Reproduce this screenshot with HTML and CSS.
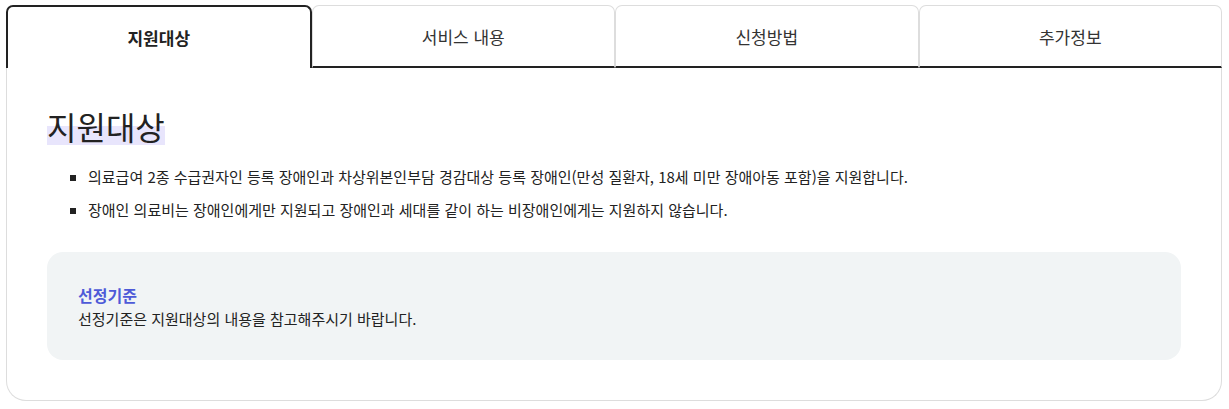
FILE: index.html
```html
<!DOCTYPE html>
<html lang="ko">
<head>
    <meta charset="UTF-8">
    <meta name="viewport" content="width=device-width, initial-scale=1.0">
    <title>지원대상</title>
    <link rel="stylesheet" href="styles.css">
</head>
<body>
    <div class="wrap">
        <div class="tabs">
            <button class="tab active" type="button">지원대상</button>
            <button class="tab" type="button">서비스 내용</button>
            <button class="tab" type="button">신청방법</button>
            <button class="tab" type="button">추가정보</button>
        </div>
        <div class="panel">
            <h2 class="title"><span>지원대상</span></h2>
            <ul class="list">
                <li>의료급여 2종 수급권자인 등록 장애인과 차상위본인부담 경감대상 등록 장애인(만성 질환자, 18세 미만 장애아동 포함)을 지원합니다.</li>
                <li>장애인 의료비는 장애인에게만 지원되고 장애인과 세대를 같이 하는 비장애인에게는 지원하지 않습니다.</li>
            </ul>
            <div class="info">
                <h3>선정기준</h3>
                <p>선정기준은 지원대상의 내용을 참고해주시기 바랍니다.</p>
            </div>
        </div>
    </div>
</body>
</html>
```

FILE: styles.css
```css
body {
    margin: 0;
    font-family: "Noto Sans CJK KR", "Noto Sans", sans-serif;
    color: #222;
    background: #fff;
}
.wrap {
    padding: 5px 7px 0 6px;
}
.tabs {
    display: flex;
}
.tab {
    flex: 1;
    height: 63px;
    font-family: inherit;
    font-size: 17px;
    color: #333;
    background: #fff;
    border: 1px solid #ddd;
    border-bottom: 2px solid #222;
    border-radius: 7px 7px 0 0;
    cursor: pointer;
    padding: 0;
}
.tab.active {
    font-weight: bold;
    color: #222;
    border: 2px solid #222;
    border-bottom: none;
}
.panel {
    border: 1px solid #ddd;
    border-top: none;
    border-radius: 0 0 20px 20px;
    padding: 35px 40px 40px 40px;
}
.title {
    margin: 0;
    font-size: 32px;
    font-weight: normal;
    line-height: 46px;
    color: #222;
}
.title span {
    background: linear-gradient(transparent 50%, #e8e5fc 50%, #e8e5fc 91%, transparent 91%);
}
.list {
    margin: 17px 0 0 0;
    padding: 0 0 0 41px;
    list-style: square;
    font-size: 15px;
}
.list li {
    line-height: 22px;
    margin-bottom: 11px;
}
.info {
    margin-top: 31px;
    background: #f1f4f5;
    border-radius: 16px;
    padding: 32px 31px 30px;
}
.info h3 {
    margin: 0;
    font-size: 16px;
    color: #4e5ad8;
    line-height: 23px;
}
.info p {
    margin: 0;
    font-size: 15px;
    line-height: 23px;
}
```
